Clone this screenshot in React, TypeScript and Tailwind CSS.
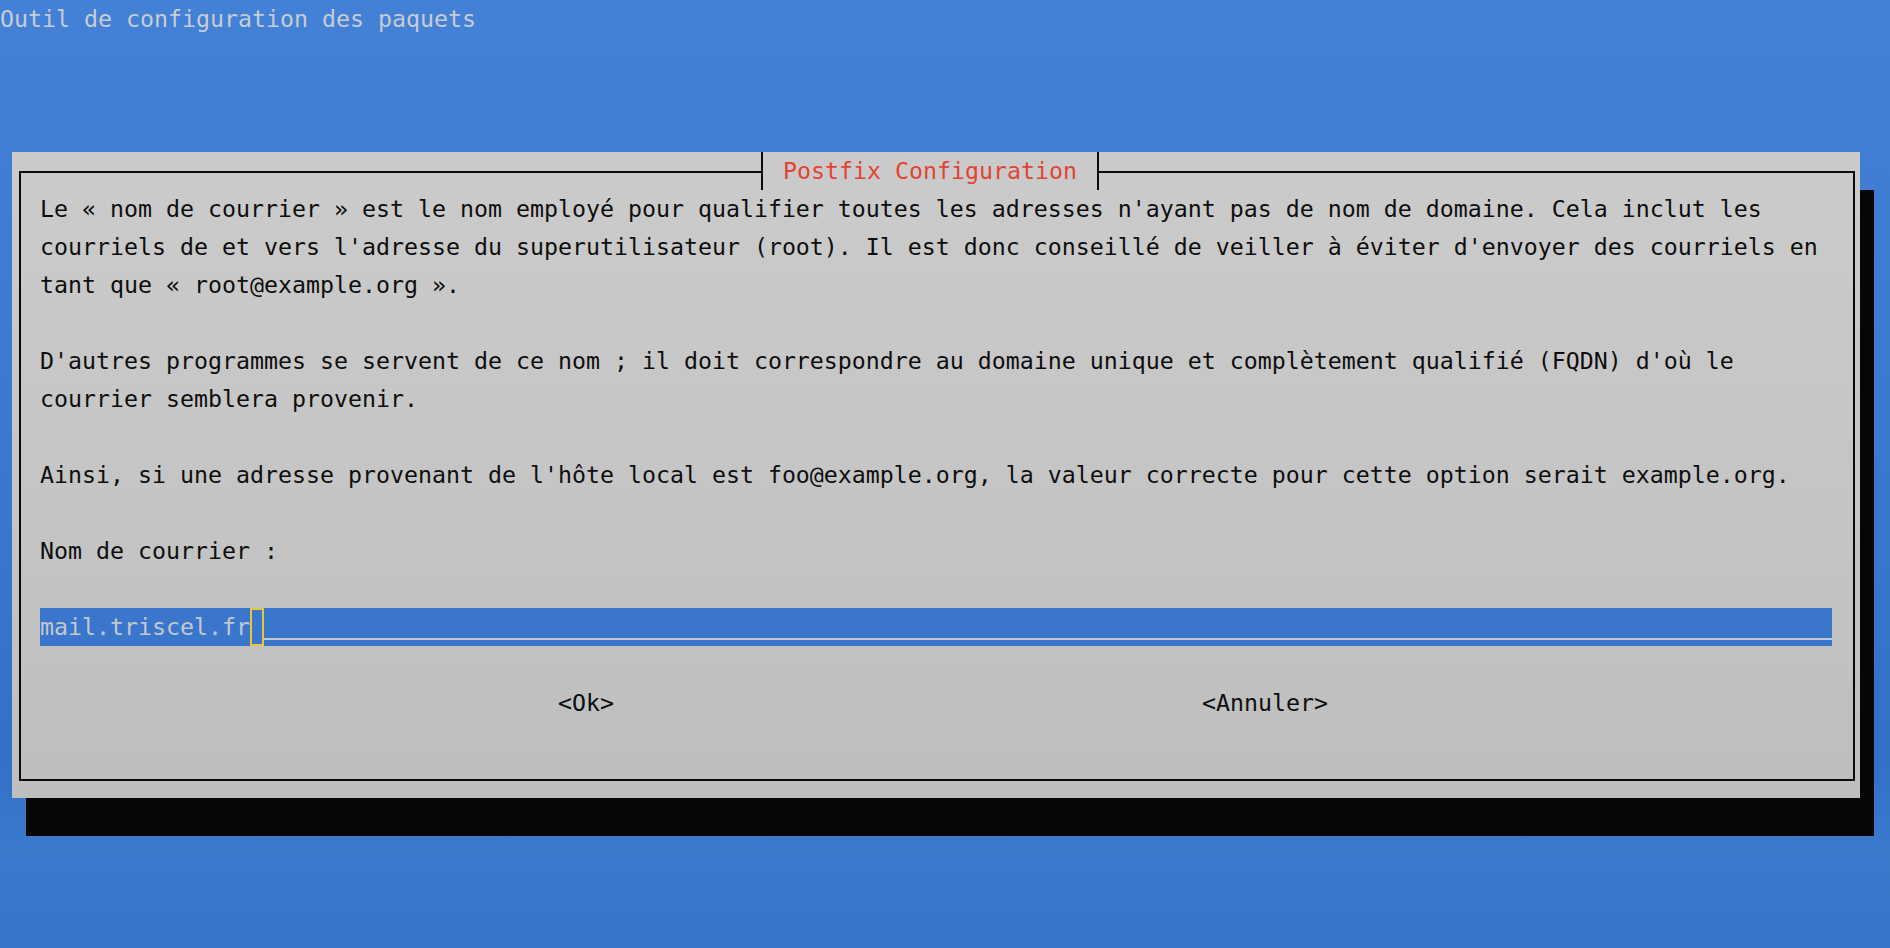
import React from "react";

const bodyLines: string[] = [
  "Le « nom de courrier » est le nom employé pour qualifier toutes les adresses n'ayant pas de nom de domaine. Cela inclut les",
  "courriels de et vers l'adresse du superutilisateur (root). Il est donc conseillé de veiller à éviter d'envoyer des courriels en",
  "tant que « root@example.org ».",
  "",
  "D'autres programmes se servent de ce nom ; il doit correspondre au domaine unique et complètement qualifié (FQDN) d'où le",
  "courrier semblera provenir.",
  "",
  "Ainsi, si une adresse provenant de l'hôte local est foo@example.org, la valeur correcte pour cette option serait example.org.",
  "",
  "Nom de courrier :",
  "",
];

const App: React.FC = () => {
  return (
    <div className="h-[948px] w-full overflow-hidden bg-[linear-gradient(180deg,#4281d6_0%,#3d7cd2_30%,#3776cb_60%,#3371c6_80%,#3b79cd_90%,#3674c9_100%)] font-['DejaVu_Sans_Mono','Liberation_Mono',monospace] text-[23.25px] leading-[38px]">
      {/* top line of the terminal */}
      <div className="h-[38px] whitespace-pre text-[#c8ccd2]">Outil de configuration des paquets</div>
      <div className="h-[114px]" />

      {/* dialog */}
      <div className="ml-[12px] h-[646px] w-[1848px] bg-[linear-gradient(180deg,#cbcbcb_0%,#c6c6c6_45%,#bebebe_100%)] pl-[7px] pt-[19px] shadow-[14px_38px_0_0_#060607]">
        <div className="relative h-[610px] w-[1836px] border-2 border-[#0a0a0a] pl-[19px] pt-[17px] text-[#0e0e0e]">
          <div className="absolute -top-[21px] left-[740px] flex h-[38px] w-[338px] items-center justify-center border-x-2 border-[#0a0a0a] bg-[#cacaca] text-[#e4432f]">
            <span className="whitespace-pre">Postfix Configuration</span>
          </div>

          {bodyLines.map((line, i) => (
            <div key={i} className="h-[38px] whitespace-pre">
              {line}
            </div>
          ))}

          {/* input field */}
          <div className="flex h-[38px] w-[1792px] bg-[#3976cc] text-[#c4c8cd]">
            <span className="whitespace-pre">mail.triscel.fr</span>
            <span className="h-[38px] w-[14px] border-2 border-[#e8c53a]" />
            <div className="flex flex-1 flex-col">
              <div className="h-[30px]" />
              <div className="h-[2px] bg-[#c6cad0]" />
            </div>
          </div>

          <div className="h-[38px]" />

          {/* buttons */}
          <div className="flex h-[38px] whitespace-pre pl-[518px]">
            <span>{"<Ok>"}</span>
            <span className="ml-[588px]">{"<Annuler>"}</span>
          </div>
        </div>
      </div>
    </div>
  );
};

export default App;
